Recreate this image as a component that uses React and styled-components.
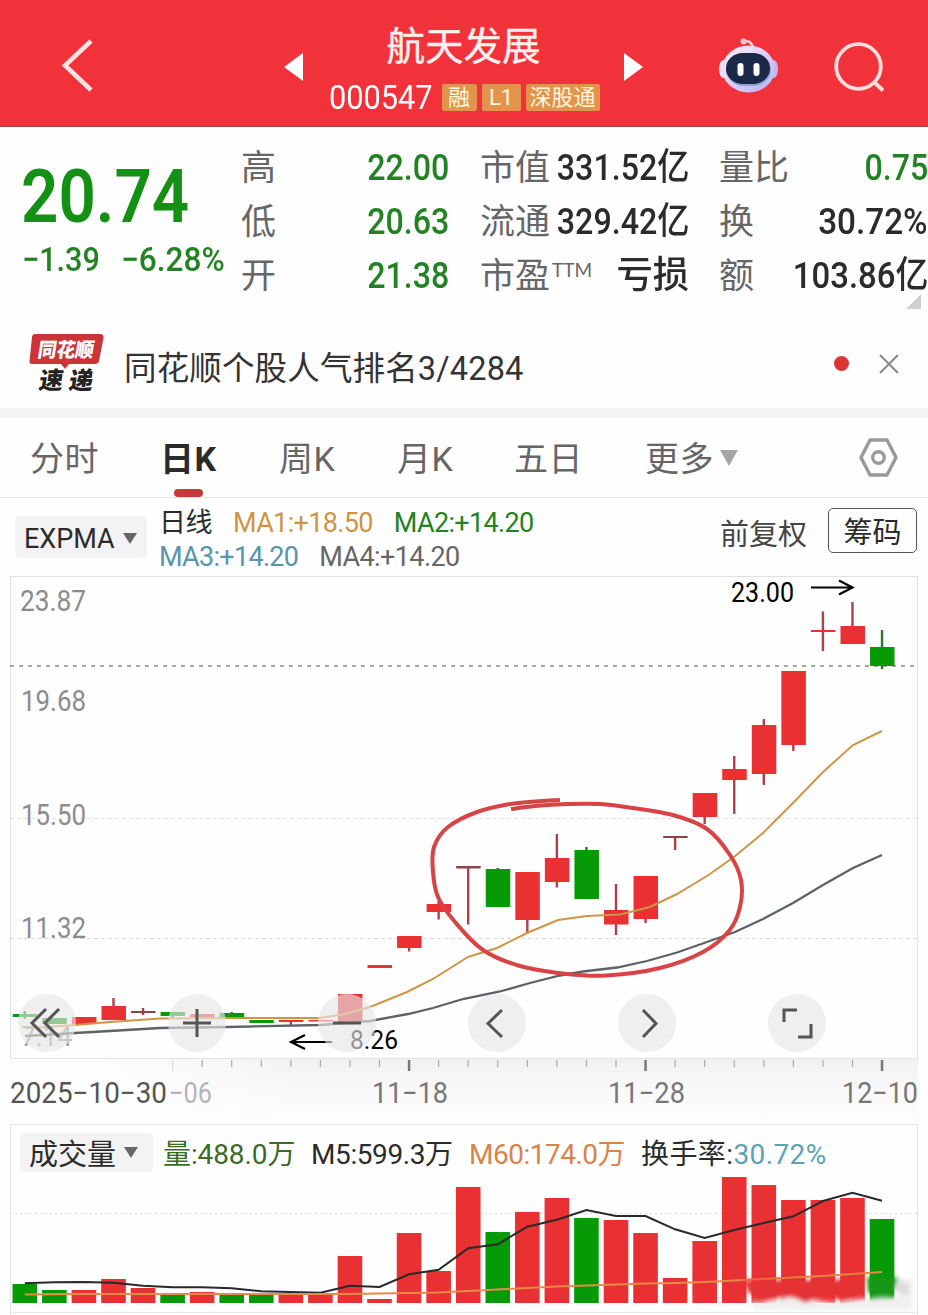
import styled, { createGlobalStyle } from "styled-components";

const RED = "#e93033";
const GREEN = "#069a06";

const GlobalStyle = createGlobalStyle`
    * { box-sizing: border-box; }
    body {
        margin: 0;
        background: #fff;
        font-family: Roboto, "Noto Sans CJK SC", sans-serif;
        color: #2b2b2b;
    }
    svg { display: block; }
`;

const Page = styled.div`
    width: 928px;
    height: 1315px;
    overflow: hidden;
    background: #fefefe;
`;

/* ---------- header ---------- */
const Header = styled.header`
    height: 127px;
    background: #f2323a;
    border-bottom: 1px solid #a8424c;
    display: grid;
    grid-template-columns: 274px 382px 272px;
`;
const HeaderSide = styled.div`
    padding: 36px 0 0 ${props => props.$pad}px;
    display: flex;
    gap: 53px;
`;
const Stock = styled.div`
    display: flex;
    justify-content: space-between;
    padding: 0 13px 0 10px;
`;
const Arrow = styled.div`
    margin-top: 53px;
    height: 28px;
    border: 14px solid transparent;
    border-left: ${props => props.$right ? "19px solid #fff" : "0"};
    border-right: ${props => props.$right ? "0" : "19px solid #fff"};
`;
const StockInfo = styled.div`
    width: 272px;
    color: #fff;
`;
const StockName = styled.div`
    padding-top: 24px;
    font-size: 38.5px;
    font-weight: 400;
    line-height: 46px;
    text-align: center;
    color: #fff0f0;
    -webkit-text-stroke: 0.4px #fff0f0;
`;
const CodeRow = styled.div`
    display: flex;
    align-items: center;
    height: 42px;
    margin-top: 6px;
    gap: 5px;
`;
const Code = styled.div`
    width: 109px;
    padding-left: 1px;
    font-size: 34px;
    transform: scaleX(0.905);
    transform-origin: left;
`;
const Tag = styled.div`
    width: ${props => props.$w}px;
    height: 27px;
    line-height: 27px;
    font-size: 22px;
    text-align: center;
    white-space: nowrap;
    background: #e2944c;
    border-radius: 2px;
    color: #fff6dc;
`;

/* ---------- quote ---------- */
const Quote = styled.section`
    height: 185px;
    padding: 14px 0 0 22px;
    display: grid;
    grid-template-columns: 219px 208px 31px 209px 30px 209px;
    position: relative;
`;
const PriceBox = styled.div`
    color: #149014;
`;
const Price = styled.div`
    font-size: 74px;
    font-weight: 600;
    line-height: 74px;
    padding-top: 19px;
    transform: scaleX(0.885);
    transform-origin: left;
    margin-left: -1px;
`;
const Change = styled.div`
    display: grid;
    grid-template-columns: 99px 110px;
    font-size: 34px;
    line-height: 40px;
    margin-top: 5px;
    color: #238223;
`;
const Squeeze = styled.span`
    display: inline-block;
    white-space: nowrap;
    font-weight: ${props => props.$weight || 500};
    transform: scaleX(${props => props.$x || 0.87});
    transform-origin: ${props => props.$from || "right"};
`;
const Stats = styled.div`
    display: grid;
    grid-auto-rows: 53.7px;
    line-height: 42px;
`;
const Stat = styled.div`
    display: flex;
    justify-content: space-between;
    align-items: center;
    white-space: nowrap;
`;
const StatLabel = styled.span`
    width: 0;
    padding-top: 3px;
    font-size: 35px;
    color: #666;
    sup {
        margin-left: 2px;
        font-size: 19px;
        line-height: 0;
        vertical-align: 11px;
        font-family: Lato, sans-serif;
        font-weight: 400;
    }
`;
const StatValue = styled.span`
    display: flex;
    justify-content: flex-end;
    padding-top: 1px;
    font-size: 37px;
    color: ${props => props.$green ? "#238223" : "#2b2b2b"};
`;
const Corner = styled.div`
    position: absolute;
    right: 7px;
    bottom: 3px;
    border-left: 15px solid transparent;
    border-bottom: 15px solid #cfcfcf;
`;

/* ---------- notice ---------- */
const Notice = styled.section`
    height: 106px;
    display: flex;
    align-items: center;
    padding: 7px 28px 0 28px;
    border-bottom: 10px solid #f5f5f5;
`;
const NoticeText = styled.div`
    flex: 1;
    padding: 4px 0 0 18px;
    font-size: 32.5px;
    letter-spacing: 0.15px;
    color: #333;
`;
const Dot = styled.div`
    width: 15px;
    height: 15px;
    border-radius: 50%;
    background: #dc3535;
    margin-right: 29px;
`;

/* ---------- tabs ---------- */
const Tabs = styled.nav`
    height: 80px;
    border-bottom: 1px solid #e4e4e4;
    display: grid;
    grid-template-columns: 130px 119px 118px 117px 131px 213px 1fr;
    padding-left: 30px;
`;
const Tab = styled.div`
    font-size: 34px;
    letter-spacing: 0.4px;
    line-height: 83px;
    height: 79px;
    white-space: nowrap;
    display: flex;
    color: ${props => props.$active ? "#2b2b2b" : "#666"};
    font-weight: ${props => props.$active ? 700 : 400};
    flex-direction: column;
    &::after {
        content: "";
        display: ${props => props.$active ? "block" : "none"};
        width: 29px;
        height: 8px;
        margin: -12px 0 0 14px;
        border-radius: 4px;
        background: #c23b3d;
    }
`;
const More = styled(Tab)`
    flex-direction: row;
    gap: 6px;
`;
const Down = styled.span`
    margin-top: ${props => props.$top || 0}px;
    height: ${props => props.$h}px;
    border: ${props => props.$size}px solid transparent;
    border-top: ${props => props.$h}px solid ${props => props.$color};
    border-bottom: 0;
`;
const Settings = styled.div`
    padding-top: 20px;
`;

/* ---------- indicators ---------- */
const Indicators = styled.section`
    height: 78px;
    display: flex;
    padding: 0 11px 0 15px;
`;
const Select = styled.div`
    display: flex;
    align-items: center;
    gap: 8px;
    height: ${props => props.$h}px;
    width: ${props => props.$w}px;
    margin-top: ${props => props.$top || 0}px;
    padding: ${props => props.$top ? 3 : 0}px 0 0 9px;
    font-size: ${props => props.$size}px;
    border-radius: 5px;
    background: #f3f3f3;
    white-space: nowrap;
`;
const Averages = styled.div`
    flex: 1;
    padding: 8px 0 0 12px;
    font-size: 27px;
    line-height: 34px;
`;
const AvgRow = styled.div`
    display: flex;
    gap: 21px;
    white-space: nowrap;
`;
const Avg = styled.span`
    color: ${props => props.$color};
    letter-spacing: ${props => props.$ls || 0}px;
`;
const Adjust = styled.div`
    font-size: 29px;
    line-height: 75px;
    color: #444;
    margin-right: 21px;
`;
const ChipButton = styled.div`
    width: 89px;
    height: 45px;
    margin-top: 10px;
    border: 1px solid #555;
    border-radius: 5px;
    font-size: 29px;
    line-height: 48px;
    text-align: center;
`;

/* ---------- charts ---------- */
const ChartArea = styled.section`
    position: relative;
    height: 548px;
`;
const Controls = styled.div`
    position: absolute;
    left: 18px;
    top: 418px;
    display: flex;
    gap: 92px;
`;
const RoundButton = styled.div`
    width: 58px;
    height: 58px;
    border-radius: 50%;
    background: rgba(230, 230, 230, 0.64);
    display: flex;
    align-items: center;
    justify-content: center;
`;
const VolumePanel = styled.section`
    margin-left: 10px;
    width: 908px;
    height: 191px;
    border: 1px solid #e4e4e4;
    border-bottom: 0;
`;
const VolumeHead = styled.div`
    height: 46px;
    display: flex;
    align-items: center;
    padding: 8px 0 0 9px;
    font-size: 28px;
    white-space: nowrap;
`;
const VolumeItem = styled.span`
    width: ${props => props.$w}px;
    padding-left: ${props => props.$pad || 0}px;
    color: ${props => props.$color};
    letter-spacing: ${props => props.$ls || 0}px;
    b { font-weight: 400; color: #5ba3b4; }
`;

const x = i => 24.8 + 29.56 * i;

// [color, body top, body bottom, high, low]
const candles = [
    ["g", 1014, 1017, 1011, 1019],
    ["g", 1018, 1024, 1018, 1024],
    ["r", 1017, 1024, 1017, 1024],
    ["r", 1006, 1020, 998, 1020],
    ["d", 1011, 1013, 1008, 1015],
    ["g", 1012, 1016, 1012, 1018],
    ["r", 1014, 1017, 1014, 1017],
    ["g", 1013, 1017, 1012, 1017],
    ["g", 1020, 1023, 1020, 1023],
    ["r", 1020, 1022, 1020, 1025],
    ["r", 1020, 1021.5, 1020, 1021],
    ["r", 994, 1022, 994, 1022],
    ["r", 965, 968, 965, 968],
    ["r", 936, 948, 936, 951.5],
    ["r", 904, 912, 901, 919.5],
    ["d", 866, 868.5, 866, 924.5],
    ["g", 869, 907, 868, 907],
    ["r", 872, 920, 872, 933],
    ["r", 858, 882, 834, 887.5],
    ["g", 850, 899, 847, 899],
    ["r", 910, 924.5, 884, 935],
    ["r", 876, 919, 876, 923],
    ["d", 836, 838, 836, 850],
    ["r", 793, 817, 793, 824],
    ["r", 769, 780, 756, 814],
    ["r", 725, 774, 719, 785],
    ["r", 671, 745, 671, 751],
    ["r", 630, 632, 611.5, 651],
    ["r", 626, 644, 602, 644],
    ["g", 647, 666, 630, 669],
];
const fills = { r: RED, g: GREEN, d: "#8a4548" };

const fastLine = "25,1028 47,1027 75,1025 110,1022 160,1018.5 233,1018 320,1018 345,1014 370,1007 407,992 433,979 468,957 497,948 527,933 558,920 587,916 620,914.5 650,907 677,894 707,876 734,857 763,833 793,803 823,772 853,745 882,731";
const slowLine = "25,1036 75,1033 110,1031 160,1028 227,1027 320,1025 370,1021 408,1014 433,1008 463,999 500,991.5 530,983 560,975.5 583,971.5 617,967.5 647,961 677,952.5 707,942 735,932 763,919 793,903 823,885 853,868 882,855";
const lasso = [[511, 809], [535, 806], [567, 804], [600, 804], [633, 808], [673, 815], [707, 829], [730, 855], [741, 880], [740, 907], [729, 931], [703, 952], [660, 968], [607, 975.5], [567, 974], [520, 966], [483, 950], [455, 922], [438, 897], [433, 872], [434, 847], [448, 827], [477, 812], [510, 804], [535, 801.5], [560, 800]];

const volumes = [
    ["g", 1284], ["g", 1290], ["r", 1290], ["r", 1279], ["r", 1288], ["g", 1293],
    ["r", 1292], ["g", 1293], ["g", 1294], ["r", 1294.5], ["r", 1295], ["r", 1256],
    ["r", 1299], ["r", 1233], ["r", 1271], ["r", 1187], ["g", 1232], ["r", 1212],
    ["r", 1198], ["g", 1218], ["r", 1220], ["r", 1233], ["r", 1278], ["r", 1241],
    ["r", 1177], ["r", 1185], ["r", 1200], ["r", 1200], ["r", 1198], ["g", 1219],
];
const m5 = [1283.3, 1282.3, 1282, 1282.7, 1285.7, 1287.3, 1287.3, 1288.3, 1291.3, 1292, 1292.7, 1285.7, 1287, 1274.3, 1269.7, 1248.3, 1244.3, 1226.7, 1219.7, 1210, 1216, 1216, 1229.3, 1238, 1230, 1223, 1216.3, 1201, 1192.7, 1200.7];
const m60 = [1294.5, 1294.2, 1294, 1294, 1294, 1294, 1294, 1294, 1294, 1294, 1294, 1294, 1293.5, 1293, 1292.5, 1291, 1289.5, 1288, 1286.5, 1285.5, 1284.5, 1283.5, 1283, 1282, 1280.5, 1279, 1277.5, 1276, 1274, 1272];

const toPoints = list => list.map((y, i) => `${x(i)},${y}`).join(" ");

// catmull-rom spline through the points
const smooth = pts => {
    let d = `M${pts[0]}`;
    for (let i = 0; i < pts.length - 1; i++) {
        const p0 = pts[i - 1] || pts[i];
        const p1 = pts[i];
        const p2 = pts[i + 1];
        const p3 = pts[i + 2] || p2;
        d += `C${p1[0] + (p2[0] - p0[0]) / 6},${p1[1] + (p2[1] - p0[1]) / 6} ${p2[0] - (p3[0] - p1[0]) / 6},${p2[1] - (p3[1] - p1[1]) / 6} ${p2}`;
    }
    return d;
};

const Label = ({ at, y, w, size = 29.5, color = "#8c8c8c", children }) => (
    <text x={at} y={y} fontSize={size} fill={color} textLength={w} lengthAdjust="spacingAndGlyphs">{children}</text>
);

const Robot = () => (
    <svg width="62" height="60" viewBox="0 0 62 60">
        <defs>
            <linearGradient id="head" x1="0" y1="0" x2="1" y2="1">
                <stop offset="0" stopColor="#fff0f6" />
                <stop offset="0.55" stopColor="#d9cdf6" />
                <stop offset="1" stopColor="#b8aef0" />
            </linearGradient>
        </defs>
        <path d="M25 6 Q34 3 35 13" fill="none" stroke="#ffd0d8" strokeWidth="2.5" />
        <circle cx="25.5" cy="5.5" r="3" fill="#ffc4cc" />
        <ellipse cx="5" cy="33" rx="4" ry="9" fill="#f4dff5" />
        <ellipse cx="56" cy="33" rx="4" ry="9" fill="#c5b5ee" />
        <ellipse cx="30.5" cy="33" rx="26.5" ry="23.5" fill="url(#head)" />
        <rect x="8" y="17" width="45" height="33" rx="18" fill="#8fa2dd" />
        <rect x="8" y="17" width="44" height="31" rx="17" fill="#1b2947" />
        <rect x="19.5" y="27" width="6" height="13" rx="3" fill="#fff" />
        <rect x="35.5" y="27" width="6" height="13" rx="3" fill="#fff" />
    </svg>
);

const Logo = () => (
    <svg width="78" height="68" viewBox="0 -2 78 68">
        <path d="M7 2H72Q76 2 75.500 6L71 29Q70.500 32 67 32H41L37 37L33 32H4Q1 32 1.500 29L4 5Q4.500 2 7 2Z" fill="#cb3538" />
        <g fontFamily='"Noto Sans CJK SC"' fontWeight="900" transform="skewX(-9)">
            <text x="13" y="25" fontSize="20" fill="#fff" textLength="56" lengthAdjust="spacingAndGlyphs">同花顺</text>
            <text x="19" y="57.5" fontSize="24" fill="#222" textLength="54" lengthAdjust="spacing">速递</text>
        </g>
    </svg>
);

const PriceChart = () => (
    <svg width="928" height="548" viewBox="0 576 928 548">
        <defs>
            <linearGradient id="axis" x1="0" y1="0" x2="0" y2="1">
                <stop offset="0" stopColor="#f1f1f1" />
                <stop offset="0.5" stopColor="#f9f9f9" />
                <stop offset="1" stopColor="#fdfdfd" />
            </linearGradient>
            <linearGradient id="axisFade">
                <stop offset="0" stopColor="#fefefe" />
                <stop offset="1" stopColor="#fefefe" stopOpacity="0" />
            </linearGradient>
        </defs>
        <rect x="100" y="1059" width="818" height="65" fill="url(#axis)" />
        <rect x="100" y="1059" width="200" height="65" fill="url(#axisFade)" />
        <rect x="10.5" y="576.5" width="907" height="482" fill="none" stroke="#e2e2e2" />
        <path d="M10 818.500H917" stroke="#e0e0e0" strokeDasharray="4 3" />
        <path d="M10 938.500H917" stroke="#d8d8d8" strokeDasharray="4 3" />
        <path d="M10 666H917" stroke="#8b8b8b" strokeWidth="1.500" strokeDasharray="4 5" />
        <Label at={20} y={611} w={66}>23.87</Label>
        <Label at={21} y={711} w={65}>19.68</Label>
        <Label at={21} y={825} w={65}>15.50</Label>
        <Label at={21} y={938} w={65}>11.32</Label>
        <Label at={21} y={1046} w={51} size={27} color="#999">7.14</Label>
        {candles.map(([c, top, bottom, high, low], i) => (
            <g key={i} fill={fills[c]}>
                <rect x={x(i) - 1.2} y={high} width="2.4" height={low - high} fill={c === "g" ? "#2c742c" : "#b04046"} />
                <rect x={x(i) - 12} y={top} width="24.500" height={bottom - top} />
            </g>
        ))}
        <polyline points={slowLine} fill="none" stroke="#5d6265" strokeWidth="2.300" />
        <polyline points={fastLine} fill="none" stroke="#cf9545" strokeWidth="2" />
        <path d={smooth(lasso)} fill="none" stroke="#d84345" strokeWidth="4" />
        <Label at={731} y={602} w={63} size={27} color="#000">23.00</Label>
        <path d="M811 587.500H852M839 580.500L852.500 587.500L839 594.500" fill="none" stroke="#000" strokeWidth="2.200" />
        <Label at={350} y={1049} w={48} size={26} color="#000">8.26</Label>
        <path d="M332 1042H291M305 1035L291 1042L305 1049" fill="none" stroke="#000" strokeWidth="2.200" />
        {candles.map((c, i) => {
            const major = i === 13 || i === 21 || i === 29;
            return i > 4 && (
                <path key={i} d={`M${x(i)} 1060V${major || i === 5 ? 1071 : 1067}`} stroke={major ? "#777" : i === 5 ? "#ddd" : "#aaa"} strokeWidth={major ? 2.5 : 1.2} />
            );
        })}
        <Label at={169} y={1102.5} w={43} size={29} color="#b5b5b5">−06</Label>
        <Label at={10} y={1102.5} w={157} size={29} color="#555">2025−10−30</Label>
        <Label at={372} y={1102.5} w={76} size={29} color="#777">11−18</Label>
        <Label at={608} y={1102.5} w={77} size={29} color="#777">11−28</Label>
        <Label at={842} y={1102.5} w={76} size={29} color="#777">12−10</Label>
    </svg>
);

const icons = [
    "M28 15L14 29L28 43M41 15L27 29L41 43",
    "M15 29H43M29 15V43",
    "M15 29H43",
    "M34 16L20 29.500L34 43",
    "M25 16L38 29.500L25 43",
    "M16 28V16H29M43 30V43H30",
];

const VolumeChart = () => (
    <svg width="906" height="144" viewBox="11 1171 906 144">
        <defs>
            <filter id="soft" x="-10%" y="-30%" width="120%" height="160%"><feGaussianBlur stdDeviation="2.2" /></filter>
        </defs>
        <path d="M10 1213.500H917" stroke="#ddd" strokeDasharray="2 3" />
        {volumes.map(([c, top], i) => (
            <rect key={i} x={x(i) - 12.3} y={top} width="24.600" height={1303 - top} fill={fills[c]} />
        ))}
        <polyline points={toPoints(m5)} fill="none" stroke="#292929" strokeWidth="2" />
        <polyline points={toPoints(m60)} fill="none" stroke="#e68b48" strokeWidth="2.200" />
        <g filter="url(#soft)">
            <path d="M742 1299L753 1303V1310H912V1280L898 1278V1297L860 1299L835 1303L790 1297L760 1303Z" fill="#f1f0f0" />
            <path d="M743 1280L835 1280L863 1275L861 1294L843 1302L825 1294L806 1303L790 1296L767 1301L749 1293Z" fill="#e53336" />
            <path d="M867 1277H898L894 1290L880 1297L868 1292Z" fill="#159615" />
            <path d="M898 1280L910 1285L908 1296L896 1292Z" fill="#ddd" />
        </g>
        <path d="M10 1312.500H917" stroke="#e8e8e8" />
    </svg>
);

const App = () => {
    return (
        <Page>
            <GlobalStyle />
            <Header>
                <HeaderSide $pad={60}>
                    <svg width="36" height="60" viewBox="0 0 36 60"><path d="M31 5L5 29.500L31 54" fill="none" stroke="#ffe3e3" strokeWidth="4.500" /></svg>
                </HeaderSide>
                <Stock>
                    <Arrow />
                    <StockInfo>
                        <StockName>航天发展</StockName>
                        <CodeRow>
                            <Code>000547</Code>
                            <Tag $w={35}>融</Tag>
                            <Tag $w={39}>L1</Tag>
                            <Tag $w={74}>深股通</Tag>
                        </CodeRow>
                    </StockInfo>
                    <Arrow $right />
                </Stock>
                <HeaderSide $pad={62}>
                    <Robot />
                    <svg width="54" height="60" viewBox="0 0 54 60"><g fill="none" stroke="#ffdede" strokeWidth="3.800"><circle cx="25.500" cy="30.500" r="22.300" /><path d="M41 46L50 54.500" /></g></svg>
                </HeaderSide>
            </Header>
            <Quote>
                <PriceBox>
                    <Price>20.74</Price>
                    <Change>
                        <Squeeze $from="left" $x={0.9}>−1.39</Squeeze>
                        <Squeeze $from="left" $x={0.93}>−6.28%</Squeeze>
                    </Change>
                </PriceBox>
                <Stats>
                    <Stat><StatLabel>高</StatLabel><StatValue $green><Squeeze>22.00</Squeeze></StatValue></Stat>
                    <Stat><StatLabel>低</StatLabel><StatValue $green><Squeeze>20.63</Squeeze></StatValue></Stat>
                    <Stat><StatLabel>开</StatLabel><StatValue $green><Squeeze>21.38</Squeeze></StatValue></Stat>
                </Stats>
                <span />
                <Stats>
                    <Stat><StatLabel>市值</StatLabel><StatValue><Squeeze>331.52亿</Squeeze></StatValue></Stat>
                    <Stat><StatLabel>流通</StatLabel><StatValue><Squeeze>329.42亿</Squeeze></StatValue></Stat>
                    <Stat><StatLabel>市盈<sup>TTM</sup></StatLabel><StatValue><Squeeze $x={0.98}>亏损</Squeeze></StatValue></Stat>
                </Stats>
                <span />
                <Stats>
                    <Stat><StatLabel>量比</StatLabel><StatValue $green><Squeeze>0.75</Squeeze></StatValue></Stat>
                    <Stat><StatLabel>换</StatLabel><StatValue><Squeeze $x={0.9}>30.72%</Squeeze></StatValue></Stat>
                    <Stat><StatLabel>额</StatLabel><StatValue><Squeeze $x={0.89}>103.86亿</Squeeze></StatValue></Stat>
                </Stats>
                <Corner />
            </Quote>
            <Notice>
                <Logo />
                <NoticeText>同花顺个股人气排名3/4284</NoticeText>
                <Dot />
                <svg width="22" height="22" viewBox="0 0 22 22"><path d="M2 2L20 20M20 2L2 20" stroke="#8d8d8d" strokeWidth="2.200" /></svg>
            </Notice>
            <Tabs>
                <Tab>分时</Tab>
                <Tab $active>日K</Tab>
                <Tab>周K</Tab>
                <Tab>月K</Tab>
                <Tab>五日</Tab>
                <More>更多<Down $size={9} $h={16} $top={32} $color="#a5a5a5" /></More>
                <Settings>
                    <svg width="42" height="40" viewBox="0 0 42 40"><g fill="none" stroke="#999" strokeWidth="3.400"><path d="M12 2H29L38 19.500L29 37H12L3 19.500Z" strokeLinejoin="round" /><circle cx="20.500" cy="19.500" r="5.800" /></g></svg>
                </Settings>
            </Tabs>
            <Indicators>
                <Select $w={132} $h={42} $top={18} $size={27}>EXPMA<Down $size={7} $h={11} $color="#666" /></Select>
                <Averages>
                    <AvgRow>
                        <Avg $color="#2b2b2b" $ls={-0.5}>日线</Avg>
                        <Avg $color="#cf9545" $ls={-0.65}>MA1:+18.50</Avg>
                        <Avg $color="#238223" $ls={-0.65}>MA2:+14.20</Avg>
                    </AvgRow>
                    <AvgRow>
                        <Avg $color="#5895ad" $ls={-0.7}>MA3:+14.20</Avg>
                        <Avg $color="#666" $ls={-0.6}>MA4:+14.20</Avg>
                    </AvgRow>
                </Averages>
                <Adjust>前复权</Adjust>
                <ChipButton>筹码</ChipButton>
            </Indicators>
            <ChartArea>
                <PriceChart />
                <Controls>
                    {icons.map(d => (
                        <RoundButton key={d}>
                            <svg width="58" height="58" viewBox="0 0 58 58"><path d={d} fill="none" stroke="#555" strokeWidth="3" /></svg>
                        </RoundButton>
                    ))}
                </Controls>
            </ChartArea>
            <VolumePanel>
                <VolumeHead>
                    <Select $w={133} $h={39} $size={29}>成交量<Down $size={7} $h={11} $color="#666" /></Select>
                    <VolumeItem $w={158} $pad={10} $color="#3c6b28" $ls={-0.1}>量:488.0万</VolumeItem>
                    <VolumeItem $w={158} $color="#2b2b2b" $ls={-0.4}>M5:599.3万</VolumeItem>
                    <VolumeItem $w={172} $color="#d98349" $ls={-0.5}>M60:174.0万</VolumeItem>
                    <VolumeItem $w={190} $color="#2b2b2b" $ls={0.4}>换手率:<b>30.72%</b></VolumeItem>
                </VolumeHead>
                <VolumeChart />
            </VolumePanel>
        </Page>
    );
};

export default App;
